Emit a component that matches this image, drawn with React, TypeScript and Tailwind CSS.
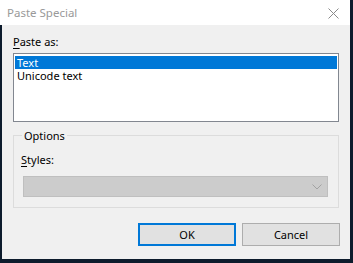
import React from 'react';

const font = { fontFamily: '"Noto Sans", "Open Sans", sans-serif' };

const App: React.FC = () => (
    <div className="w-[353px] h-[263px] bg-[#0d1b2c] overflow-hidden text-[11px] text-black" style={font}>
        <div className="w-[350px] h-[259px] flex flex-col">
            {/* Title bar */}
            <div className="h-[25px] bg-white flex items-center justify-between pl-[7px] pr-[11px]">
                <span className="text-[#999999] text-[11.5px] leading-[16px]">Paste Special</span>
                <svg width="11" height="11" viewBox="0 0 11 11" className="mt-[1px]">
                    <path d="M0.5 0.5 L10.5 10.5 M10.5 0.5 L0.5 10.5" stroke="#8a8a8a" strokeWidth="1" fill="none" />
                </svg>
            </div>

            {/* Client */}
            <div className="flex-1 bg-[#f0f0f0] border-l-[2px] border-[#0d1b2c] pl-[11px] pr-[11px] flex flex-col">
                <div className="mt-[9px] leading-[15px]">
                    <span className="underline underline-offset-2">P</span>aste as:
                </div>

                {/* List box */}
                <div className="mt-[4px] h-[69px] bg-white border border-[#828790] pt-[2px] px-[1px]">
                    <div className="h-[13px] leading-[13px] bg-[#0078d7] text-white pl-[2px]">Text</div>
                    <div className="h-[13px] leading-[13px] pl-[2px]">Unicode text</div>
                </div>

                {/* Options group */}
                <div className="relative mt-[13px] h-[73px] border border-[#dcdcdc] pt-[16px] pl-[7px] pr-[10px]">
                    <span className="absolute -top-[8px] left-[8px] px-[2px] bg-[#f0f0f0] leading-[15px]">Options</span>
                    <div className="leading-[15px]">
                        <span className="underline underline-offset-2">S</span>tyles:
                    </div>
                    <div className="mt-[9px] ml-[2px] h-[21px] bg-[#cccccc] border border-[#bfbfbf] flex items-center justify-end pr-[5px]">
                        <svg width="10" height="6" viewBox="0 0 10 6">
                            <path d="M0.5 0.5 L5 5 L9.5 0.5" stroke="#a2a2a2" strokeWidth="1" fill="none" />
                        </svg>
                    </div>
                </div>

                {/* Buttons */}
                <div className="mt-[15px] flex justify-end gap-[6px]">
                    <button className="w-[98px] h-[23px] bg-[#e1e1e1] border-2 border-[#0078d7] leading-[15px]">OK</button>
                    <button className="w-[98px] h-[23px] bg-[#e1e1e1] border border-[#adadad] leading-[15px] mr-[-1px]">Cancel</button>
                </div>
            </div>
        </div>
    </div>
);

export default App;
